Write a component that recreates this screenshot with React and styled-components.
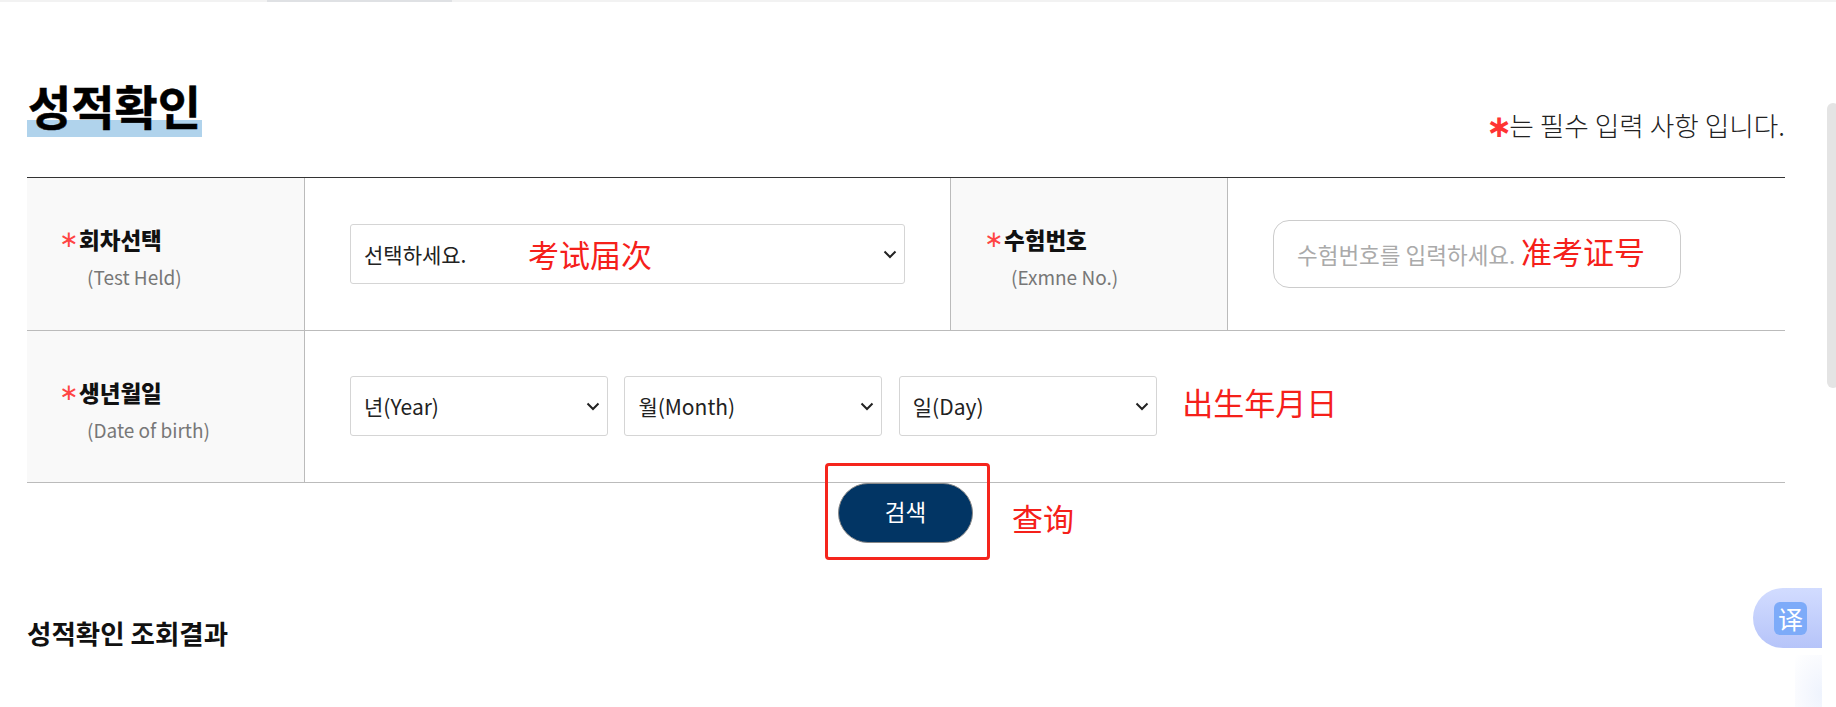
import styled, { createGlobalStyle } from 'styled-components';

const KR = `"Noto Sans CJK KR", "Noto Sans KR", sans-serif`;
const SC = `"Noto Sans CJK SC", sans-serif`;

const chevron = `url("data:image/svg+xml,%3Csvg xmlns='http://www.w3.org/2000/svg' width='14' height='9' viewBox='0 0 14 9'%3E%3Cpath d='M1.5 1.5 7 7l5.5-5.5' fill='none' stroke='%23222' stroke-width='2'/%3E%3C/svg%3E")`;

const GlobalStyle = createGlobalStyle`
  html, body {
    margin: 0;
    padding: 0;
    height: 100%;
    overflow: hidden;
    background: #fff;
  }
  * {
    box-sizing: border-box;
  }
`;

export default function App() {
  return (
    <Page>
      <GlobalStyle />
      <TopStrip>
        <TopStripShade />
      </TopStrip>
      <Content>
        <Header>
          <Title>성적확인</Title>
          <Notice>
            <NoticeStar>∗</NoticeStar>는 필수 입력 사항 입니다.
          </Notice>
        </Header>

        <FormTable>
          <colgroup>
            <col width="278" />
            <col width="645" />
            <col width="278" />
            <col />
          </colgroup>
          <tbody>
            <tr>
              <LabelCell $height={153}>
                <LabelInner $left={34}>
                  <LabelName>
                    <Star>∗</Star>회차선택
                  </LabelName>
                  <LabelSub $indent={26}>(Test Held)</LabelSub>
                </LabelInner>
              </LabelCell>
              <FieldCell $height={153}>
                <Field>
                  <Select $width={555}>
                    <option>선택하세요.</option>
                  </Select>
                  <Note lang="zh-CN" $left={178} $top={7}>考试届次</Note>
                </Field>
              </FieldCell>
              <LabelCell $height={153} $divided>
                <LabelInner $left={35}>
                  <LabelName>
                    <Star>∗</Star>수험번호
                  </LabelName>
                  <LabelSub $indent={25}>(Exmne No.)</LabelSub>
                </LabelInner>
              </LabelCell>
              <FieldCell $height={153}>
                <Field>
                  <TextInput placeholder="수험번호를 입력하세요." />
                  <Note lang="zh-CN" $left={248} $top={8}>准考证号</Note>
                </Field>
              </FieldCell>
            </tr>
            <tr>
              <LabelCell $height={152}>
                <LabelInner $left={34}>
                  <LabelName>
                    <Star>∗</Star>생년월일
                  </LabelName>
                  <LabelSub $indent={26}>(Date of birth)</LabelSub>
                </LabelInner>
              </LabelCell>
              <FieldCell $height={152} colSpan={3}>
                <DateRow>
                  <Select $width={258}>
                    <option>년(Year)</option>
                  </Select>
                  <Select $width={258}>
                    <option>월(Month)</option>
                  </Select>
                  <Select $width={258}>
                    <option>일(Day)</option>
                  </Select>
                  <InlineNote lang="zh-CN">出生年月日</InlineNote>
                </DateRow>
              </FieldCell>
            </tr>
          </tbody>
        </FormTable>

        <ButtonRow>
          <SearchArea>
            <SearchButton type="button">검색</SearchButton>
            <RedFrame />
            <SearchNote lang="zh-CN">查询</SearchNote>
          </SearchArea>
        </ButtonRow>

        <ResultTitle>성적확인 조회결과</ResultTitle>
      </Content>

      <TranslateTab>
        <TranslateIcon lang="zh-CN">译</TranslateIcon>
      </TranslateTab>
      <TabGlow />
      <ScrollThumb />
    </Page>
  );
}

const Page = styled.div`
  position: relative;
  width: 1836px;
  height: 707px;
  overflow: hidden;
  background: #fff;
  font-family: ${KR};
  color: #111;
`;

const TopStrip = styled.div`
  height: 2px;
  background: #f2f2f2;
  padding-left: 267px;
`;

const TopStripShade = styled.div`
  width: 185px;
  height: 2px;
  background: #dfe1e4;
`;

const Content = styled.main`
  width: 1785px;
  padding-left: 27px;
`;

const Header = styled.header`
  display: flex;
  justify-content: space-between;
  align-items: flex-end;
  height: 175px;
  padding-top: 55px;
  padding-bottom: 28px;
`;

const Title = styled.h1`
  margin: 0 0 12px;
  height: 63px;
  padding: 0 1px 0 1px;
  font-size: 47px;
  line-height: 61px;
  font-weight: 700;
  -webkit-text-stroke: 0.5px #000;
  color: #000;
  background: linear-gradient(#b0d3ec, #b0d3ec) no-repeat left bottom / 100% 17px;
`;

const Notice = styled.p`
  margin: 0 0 6px;
  font-size: 26.7px;
  line-height: 36px;
  font-weight: 300;
  color: #222;
`;

const NoticeStar = styled.span`
  margin-right: -3px;
  color: #f33;
  font-family: "DejaVu Sans", sans-serif;
  font-size: 31px;
  font-weight: 700;
  line-height: 0;
  vertical-align: -1px;
`;

const FormTable = styled.table`
  width: 100%;
  table-layout: fixed;
  border-collapse: separate;
  border-spacing: 0;
  border-top: 1px solid #333;
`;

const LabelCell = styled.td`
  height: ${(p) => p.$height}px;
  padding: 0;
  background: #f9f9f9;
  border-right: 1px solid #bbb;
  border-left: ${(p) => (p.$divided ? '1px solid #bbb' : '0')};
  border-bottom: 1px solid #bbb;
`;

const FieldCell = styled.td`
  height: ${(p) => p.$height}px;
  padding: 0 0 0 45px;
  border-bottom: 1px solid #bbb;
`;

const LabelInner = styled.div`
  padding-top: 5px;
  padding-left: ${(p) => p.$left}px;
`;

const LabelName = styled.div`
  display: flex;
  align-items: center;
  font-size: 22.5px;
  line-height: 32px;
  font-weight: 900;
  color: #111;
`;

const Star = styled.span`
  flex: none;
  width: 18px;
  margin-left: -2px;
  margin-right: 2px;
  color: #f44;
  font-family: "DejaVu Sans", sans-serif;
  font-size: 23px;
  line-height: 26px;
  font-weight: 400;
`;

const LabelSub = styled.div`
  margin-top: 9px;
  padding-left: ${(p) => p.$indent}px;
  font-size: 19px;
  line-height: 26px;
  font-weight: 400;
  color: #777;
`;

const Field = styled.div`
  position: relative;
  width: fit-content;
`;

const Select = styled.select`
  display: block;
  appearance: none;
  width: ${(p) => p.$width}px;
  height: 60px;
  padding: 0 28px 0 13px;
  background: #fff ${chevron} no-repeat right 7px center;
  border: 1px solid #d5d5d5;
  border-radius: 3px;
  font-family: ${KR};
  font-size: 21px;
  font-weight: 400;
  color: #222;
`;

const TextInput = styled.input`
  display: block;
  width: 408px;
  height: 68px;
  padding: 0 23px;
  background: #fff;
  border: 1px solid #ccc;
  border-radius: 16px;
  font-family: ${KR};
  font-size: 22.5px;
  font-weight: 400;

  &::placeholder {
    color: #aaa;
    opacity: 1;
  }
`;

const Note = styled.span`
  position: absolute;
  left: ${(p) => p.$left}px;
  top: ${(p) => p.$top}px;
  font-family: ${SC};
  font-size: 31px;
  line-height: 46px;
  font-weight: 400;
  color: #f5201a;
  white-space: nowrap;
`;

const DateRow = styled.div`
  display: flex;
  align-items: center;
  gap: 16.4px;
  margin-top: -1px;
`;

const InlineNote = styled.span`
  margin-left: 9px;
  margin-top: -8px;
  font-family: ${SC};
  font-size: 31px;
  line-height: 46px;
  color: #f5201a;
  white-space: nowrap;
`;

const ButtonRow = styled.div`
  display: flex;
  padding-left: 811px;
`;

const SearchArea = styled.div`
  position: relative;
`;

const SearchButton = styled.button`
  display: block;
  width: 135px;
  height: 60px;
  background: #023564;
  border: 1px solid #888;
  border-radius: 30px;
  font-family: ${KR};
  font-size: 22.5px;
  font-weight: 400;
  color: #fff;
  padding: 0 0 5px;
`;

const RedFrame = styled.div`
  position: absolute;
  left: -13px;
  top: -20px;
  width: 165px;
  height: 97px;
  border: 3px solid #f5251d;
  border-radius: 4px;
  pointer-events: none;
`;

const SearchNote = styled.span`
  position: absolute;
  left: 174px;
  top: 12px;
  font-family: ${SC};
  font-size: 31px;
  line-height: 46px;
  color: #f5201a;
  white-space: nowrap;
`;

const ResultTitle = styled.h2`
  margin: 71px 0 0;
  font-size: 26.5px;
  line-height: 38px;
  font-weight: 700;
  color: #111;
`;

const TranslateTab = styled.div`
  position: absolute;
  left: 1753px;
  top: 588px;
  display: flex;
  align-items: center;
  width: 69px;
  height: 60px;
  padding-left: 21px;
  border-radius: 30px 0 0 30px;
  background: linear-gradient(#d2dcff, #b6c4f9);
`;

const TranslateIcon = styled.span`
  display: flex;
  align-items: center;
  justify-content: center;
  width: 33px;
  height: 33px;
  border-radius: 6px;
  background: #7dabf9;
  font-family: ${SC};
  font-size: 25px;
  line-height: 33px;
  color: #fff;
`;

const TabGlow = styled.div`
  position: absolute;
  left: 1795px;
  top: 655px;
  width: 27px;
  height: 52px;
  background: radial-gradient(ellipse at 100% 75%, #eef3fd 0%, #f7f9fe 50%, #fff 100%);
`;

const ScrollThumb = styled.div`
  position: absolute;
  left: 1827px;
  top: 103px;
  width: 12px;
  height: 285px;
  border-radius: 6px;
  background: #e4e4e4;
`;
